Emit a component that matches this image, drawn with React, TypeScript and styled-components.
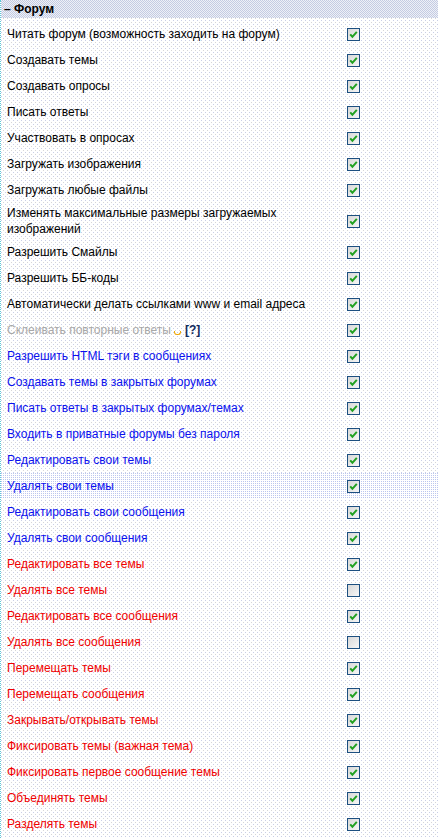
import React from 'react';
import styled, { createGlobalStyle, css } from 'styled-components';

const GlobalStyle = createGlobalStyle`
  html, body {
    margin: 0;
    padding: 0;
    background: #ffffff;
  }
  body {
    font-family: "Liberation Sans", Arial, sans-serif;
    font-size: 12px;
  }
`;

// dotted backgrounds, built from 1px conic "pixels"
const dots = (a: string, b: string, size: number) => css`
  background-color: #ffffff;
  background-image:
    conic-gradient(at 1px 1px, transparent 270deg, ${a} 270deg),
    conic-gradient(at 1px 1px, transparent 270deg, ${b} 270deg);
  background-size: ${size}px ${size}px, ${size}px ${size}px;
  background-position: 0 0, ${size / 2}px ${size / 2}px;
`;

type Tone = 'black' | 'gray' | 'blue' | 'red';

const toneColor: Record<Tone, string> = {
  black: '#000000',
  gray: '#a8a8a8',
  blue: '#0a10ee',
  red: '#f00000',
};

// Whole permissions panel
const Panel = styled.div`
  width: 438px;
  min-height: 838px;
  box-sizing: border-box;
  border-left: 1px dotted #5fc8d8;
  ${dots('#c9cee6', '#d6d6d6', 4)}
`;

// Section header row
const Header = styled.div`
  height: 18px;
  margin-bottom: 3px;
  display: flex;
  align-items: center;
  padding-left: 3px;
  font-weight: 700;
  font-size: 12px;
  color: #000;
  background-color: #e6e9f2;
  background-image: repeating-conic-gradient(#c4cbe2 0 25%, #eef0f7 0 50%);
  background-size: 2px 2px;
`;

// One permission row
const Row = styled.div<{ $hover?: boolean }>`
  display: grid;
  grid-template-columns: 340px 1fr;
  align-items: center;
  min-height: 26px;
  ${({ $hover }) =>
    $hover &&
    css`
      background-color: #ffffff;
      background-image:
        conic-gradient(at 1px 1px, transparent 270deg, #bcc6ee 270deg);
      background-size: 2px 2px;
    `}
`;

const Label = styled.div<{ $tone: Tone }>`
  padding: 2px 4px 2px 6px;
  line-height: 16px;
  color: ${({ $tone }) => toneColor[$tone]};
`;

const Mark = styled.span`
  display: inline-block;
  width: 5px;
  height: 3px;
  margin-left: 3px;
  border: 1px solid #f0a800;
  border-top: none;
  border-radius: 0 0 3px 3px;
  vertical-align: -1px;
`;

const Help = styled.span`
  margin-left: 4px;
  font-weight: 700;
  color: #0f2a5c;
`;

const BoxCell = styled.div`
  padding-left: 6px;
  display: flex;
  align-items: center;
`;

const Box = styled.span`
  width: 11px;
  height: 11px;
  border: 1px solid #1c4f80;
  display: flex;
  align-items: center;
  justify-content: center;
  background: linear-gradient(135deg, #d8d8d8, #f6f6f6);
`;

const Check: React.FC<{ on: boolean }> = ({ on }) => (
  <Box>
    {on && (
      <svg width="9" height="9" viewBox="0 0 9 9">
        <path d="M1.2 4.4 L3.4 6.8 L7.8 1.8" fill="none" stroke="#21a121" strokeWidth="2" />
      </svg>
    )}
  </Box>
);

interface Perm {
  text: string;
  tone: Tone;
  on?: boolean;
  help?: boolean;
  hover?: boolean;
}

const perms: Perm[] = [
  { text: 'Читать форум (возможность заходить на форум)', tone: 'black' },
  { text: 'Создавать темы', tone: 'black' },
  { text: 'Создавать опросы', tone: 'black' },
  { text: 'Писать ответы', tone: 'black' },
  { text: 'Участвовать в опросах', tone: 'black' },
  { text: 'Загружать изображения', tone: 'black' },
  { text: 'Загружать любые файлы', tone: 'black' },
  { text: 'Изменять максимальные размеры загружаемых изображений', tone: 'black' },
  { text: 'Разрешить Смайлы', tone: 'black' },
  { text: 'Разрешить ББ-коды', tone: 'black' },
  { text: 'Автоматически делать ссылками www и email адреса', tone: 'black' },
  { text: 'Склеивать повторные ответы', tone: 'gray', help: true },
  { text: 'Разрешить HTML тэги в сообщениях', tone: 'blue' },
  { text: 'Создавать темы в закрытых форумах', tone: 'blue' },
  { text: 'Писать ответы в закрытых форумах/темах', tone: 'blue' },
  { text: 'Входить в приватные форумы без пароля', tone: 'blue' },
  { text: 'Редактировать свои темы', tone: 'blue' },
  { text: 'Удалять свои темы', tone: 'blue', hover: true },
  { text: 'Редактировать свои сообщения', tone: 'blue' },
  { text: 'Удалять свои сообщения', tone: 'blue' },
  { text: 'Редактировать все темы', tone: 'red' },
  { text: 'Удалять все темы', tone: 'red', on: false },
  { text: 'Редактировать все сообщения', tone: 'red' },
  { text: 'Удалять все сообщения', tone: 'red', on: false },
  { text: 'Перемещать темы', tone: 'red' },
  { text: 'Перемещать сообщения', tone: 'red' },
  { text: 'Закрывать/открывать темы', tone: 'red' },
  { text: 'Фиксировать темы (важная тема)', tone: 'red' },
  { text: 'Фиксировать первое сообщение темы', tone: 'red' },
  { text: 'Объединять темы', tone: 'red' },
  { text: 'Разделять темы', tone: 'red' },
];

const App: React.FC = () => (
  <>
    <GlobalStyle />
    <Panel>
      <Header>– Форум</Header>
      {perms.map(p => (
        <Row key={p.text} $hover={p.hover}>
          <Label $tone={p.tone}>
            {p.text}
            {p.help && (
              <>
                <Mark />
                <Help>[?]</Help>
              </>
            )}
          </Label>
          <BoxCell>
            <Check on={p.on !== false} />
          </BoxCell>
        </Row>
      ))}
    </Panel>
  </>
);

export default App;
